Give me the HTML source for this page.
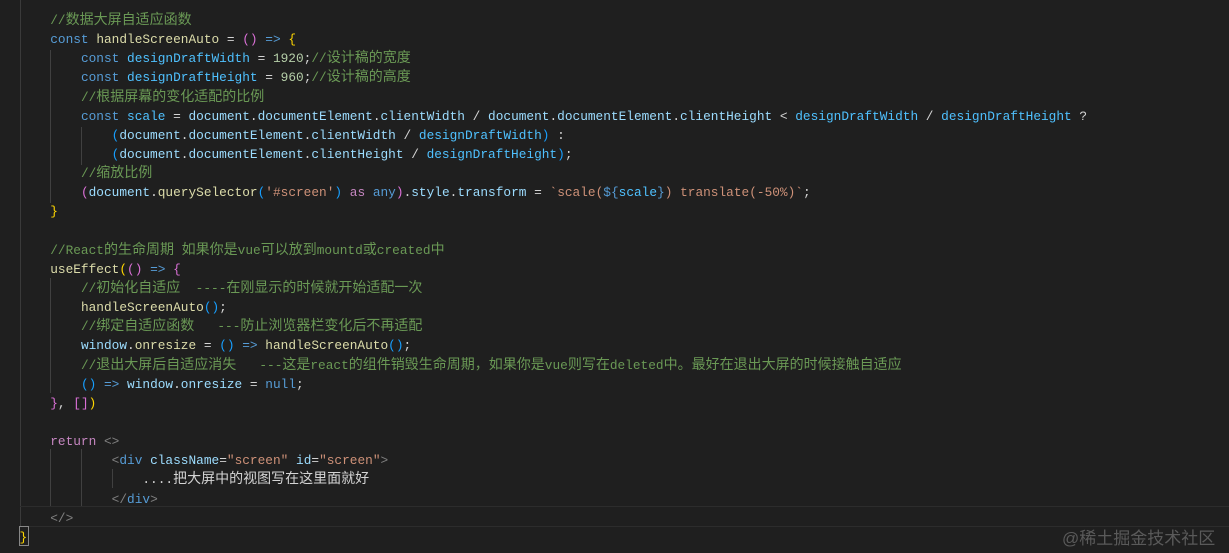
<!DOCTYPE html>
<html><head><meta charset="utf-8"><style>
html,body{margin:0;padding:0;background:#1f1f1f;width:1229px;height:553px;overflow:hidden;position:relative}
pre{position:absolute;left:19.5px;top:11px;margin:0;font-family:"Liberation Mono","Noto Sans CJK SC",monospace;font-size:12.8px;line-height:19.15px;color:#d4d4d4;white-space:pre}
pre>div{height:19.15px}
.z{font-size:14px;line-height:0;font-family:"Noto Sans CJK SC",sans-serif}
.k{color:#569cd6}.f{color:#dcdcaa}.c{color:#6a9955}.n{color:#b5cea8}.s{color:#ce9178}
.v{color:#9cdcfe}.cn{color:#4fc1ff}.y{color:#ffd700}.p{color:#da70d6}.b{color:#179fff}.r{color:#c586c0}.t{color:#808080}
.g{position:absolute;width:1px;background:#404040}
.hl{position:absolute;left:20px;right:0;top:506px;height:19px;border-top:1px solid #2c2c2c;border-bottom:1px solid #2c2c2c}
.wm{position:absolute;left:1062px;top:524px;font-family:"Liberation Sans","Noto Sans CJK SC",sans-serif;font-size:17px;color:#5a5a5a}
.box{position:absolute;left:19px;top:526px;width:8px;height:18px;border:1px solid #888}
</style></head><body>
<div class="g" style="left:20px;top:0;height:526px;background:#3a3a3a"></div>
<div class="g" style="left:50px;top:50px;height:153px"></div>
<div class="g" style="left:81px;top:127px;height:38px"></div>
<div class="g" style="left:50px;top:278px;height:115px"></div>
<div class="g" style="left:50px;top:449px;height:57px"></div>
<div class="g" style="left:81px;top:449px;height:57px"></div>
<div class="g" style="left:112px;top:469px;height:19px"></div>
<div class="hl"></div>
<div class="box"></div>
<pre><div>    <span class="c">//<span class="z">数据大屏自适应函数</span></span></div><div>    <span class="k">const</span> <span class="f">handleScreenAuto</span> = <span class="p">()</span> <span class="k">=&gt;</span> <span class="y">{</span></div><div>        <span class="k">const</span> <span class="cn">designDraftWidth</span> = <span class="n">1920</span>;<span class="c">//<span class="z">设计稿的宽度</span></span></div><div>        <span class="k">const</span> <span class="cn">designDraftHeight</span> = <span class="n">960</span>;<span class="c">//<span class="z">设计稿的高度</span></span></div><div>        <span class="c">//<span class="z">根据屏幕的变化适配的比例</span></span></div><div>        <span class="k">const</span> <span class="cn">scale</span> = <span class="v">document</span>.<span class="v">documentElement</span>.<span class="v">clientWidth</span> / <span class="v">document</span>.<span class="v">documentElement</span>.<span class="v">clientHeight</span> &lt; <span class="cn">designDraftWidth</span> / <span class="cn">designDraftHeight</span> ?</div><div>            <span class="b">(</span><span class="v">document</span>.<span class="v">documentElement</span>.<span class="v">clientWidth</span> / <span class="cn">designDraftWidth</span><span class="b">)</span> :</div><div>            <span class="b">(</span><span class="v">document</span>.<span class="v">documentElement</span>.<span class="v">clientHeight</span> / <span class="cn">designDraftHeight</span><span class="b">)</span>;</div><div>        <span class="c">//<span class="z">缩放比例</span></span></div><div>        <span class="p">(</span><span class="v">document</span>.<span class="f">querySelector</span><span class="b">(</span><span class="s">'#screen'</span><span class="b">)</span> <span class="r">as</span> <span class="k">any</span><span class="p">)</span>.<span class="v">style</span>.<span class="v">transform</span> = <span class="s">`scale(</span><span class="k">${</span><span class="cn">scale</span><span class="k">}</span><span class="s">) translate(-50%)`</span>;</div><div>    <span class="y">}</span></div><div> </div><div>    <span class="c">//React<span class="z">的生命周期</span> <span class="z">如果你是</span>vue<span class="z">可以放到</span>mountd<span class="z">或</span>created<span class="z">中</span></span></div><div>    <span class="f">useEffect</span><span class="y">(</span><span class="p">()</span> <span class="k">=&gt;</span> <span class="p">{</span></div><div>        <span class="c">//<span class="z">初始化自适应</span>  ----<span class="z">在刚显示的时候就开始适配一次</span></span></div><div>        <span class="f">handleScreenAuto</span><span class="b">()</span>;</div><div>        <span class="c">//<span class="z">绑定自适应函数</span>   ---<span class="z">防止浏览器栏变化后不再适配</span></span></div><div>        <span class="v">window</span>.<span class="f">onresize</span> = <span class="b">()</span> <span class="k">=&gt;</span> <span class="f">handleScreenAuto</span><span class="b">()</span>;</div><div>        <span class="c">//<span class="z">退出大屏后自适应消失</span>   ---<span class="z">这是</span>react<span class="z">的组件销毁生命周期，如果你是</span>vue<span class="z">则写在</span>deleted<span class="z">中。最好在退出大屏的时候接触自适应</span></span></div><div>        <span class="b">()</span> <span class="k">=&gt;</span> <span class="v">window</span>.<span class="v">onresize</span> = <span class="k">null</span>;</div><div>    <span class="p">}</span>, <span class="p">[]</span><span class="y">)</span></div><div> </div><div>    <span class="r">return</span> <span class="t">&lt;&gt;</span></div><div>            <span class="t">&lt;</span><span class="k">div</span> <span class="v">className</span>=<span class="s">"screen"</span> <span class="v">id</span>=<span class="s">"screen"</span><span class="t">&gt;</span></div><div>                ....<span class="z">把大屏中的视图写在这里面就好</span></div><div>            <span class="t">&lt;/</span><span class="k">div</span><span class="t">&gt;</span></div><div>    <span class="t">&lt;/&gt;</span></div><div><span class="y">}</span></div></pre>
<div class="wm">@稀土掘金技术社区</div>
</body></html>
